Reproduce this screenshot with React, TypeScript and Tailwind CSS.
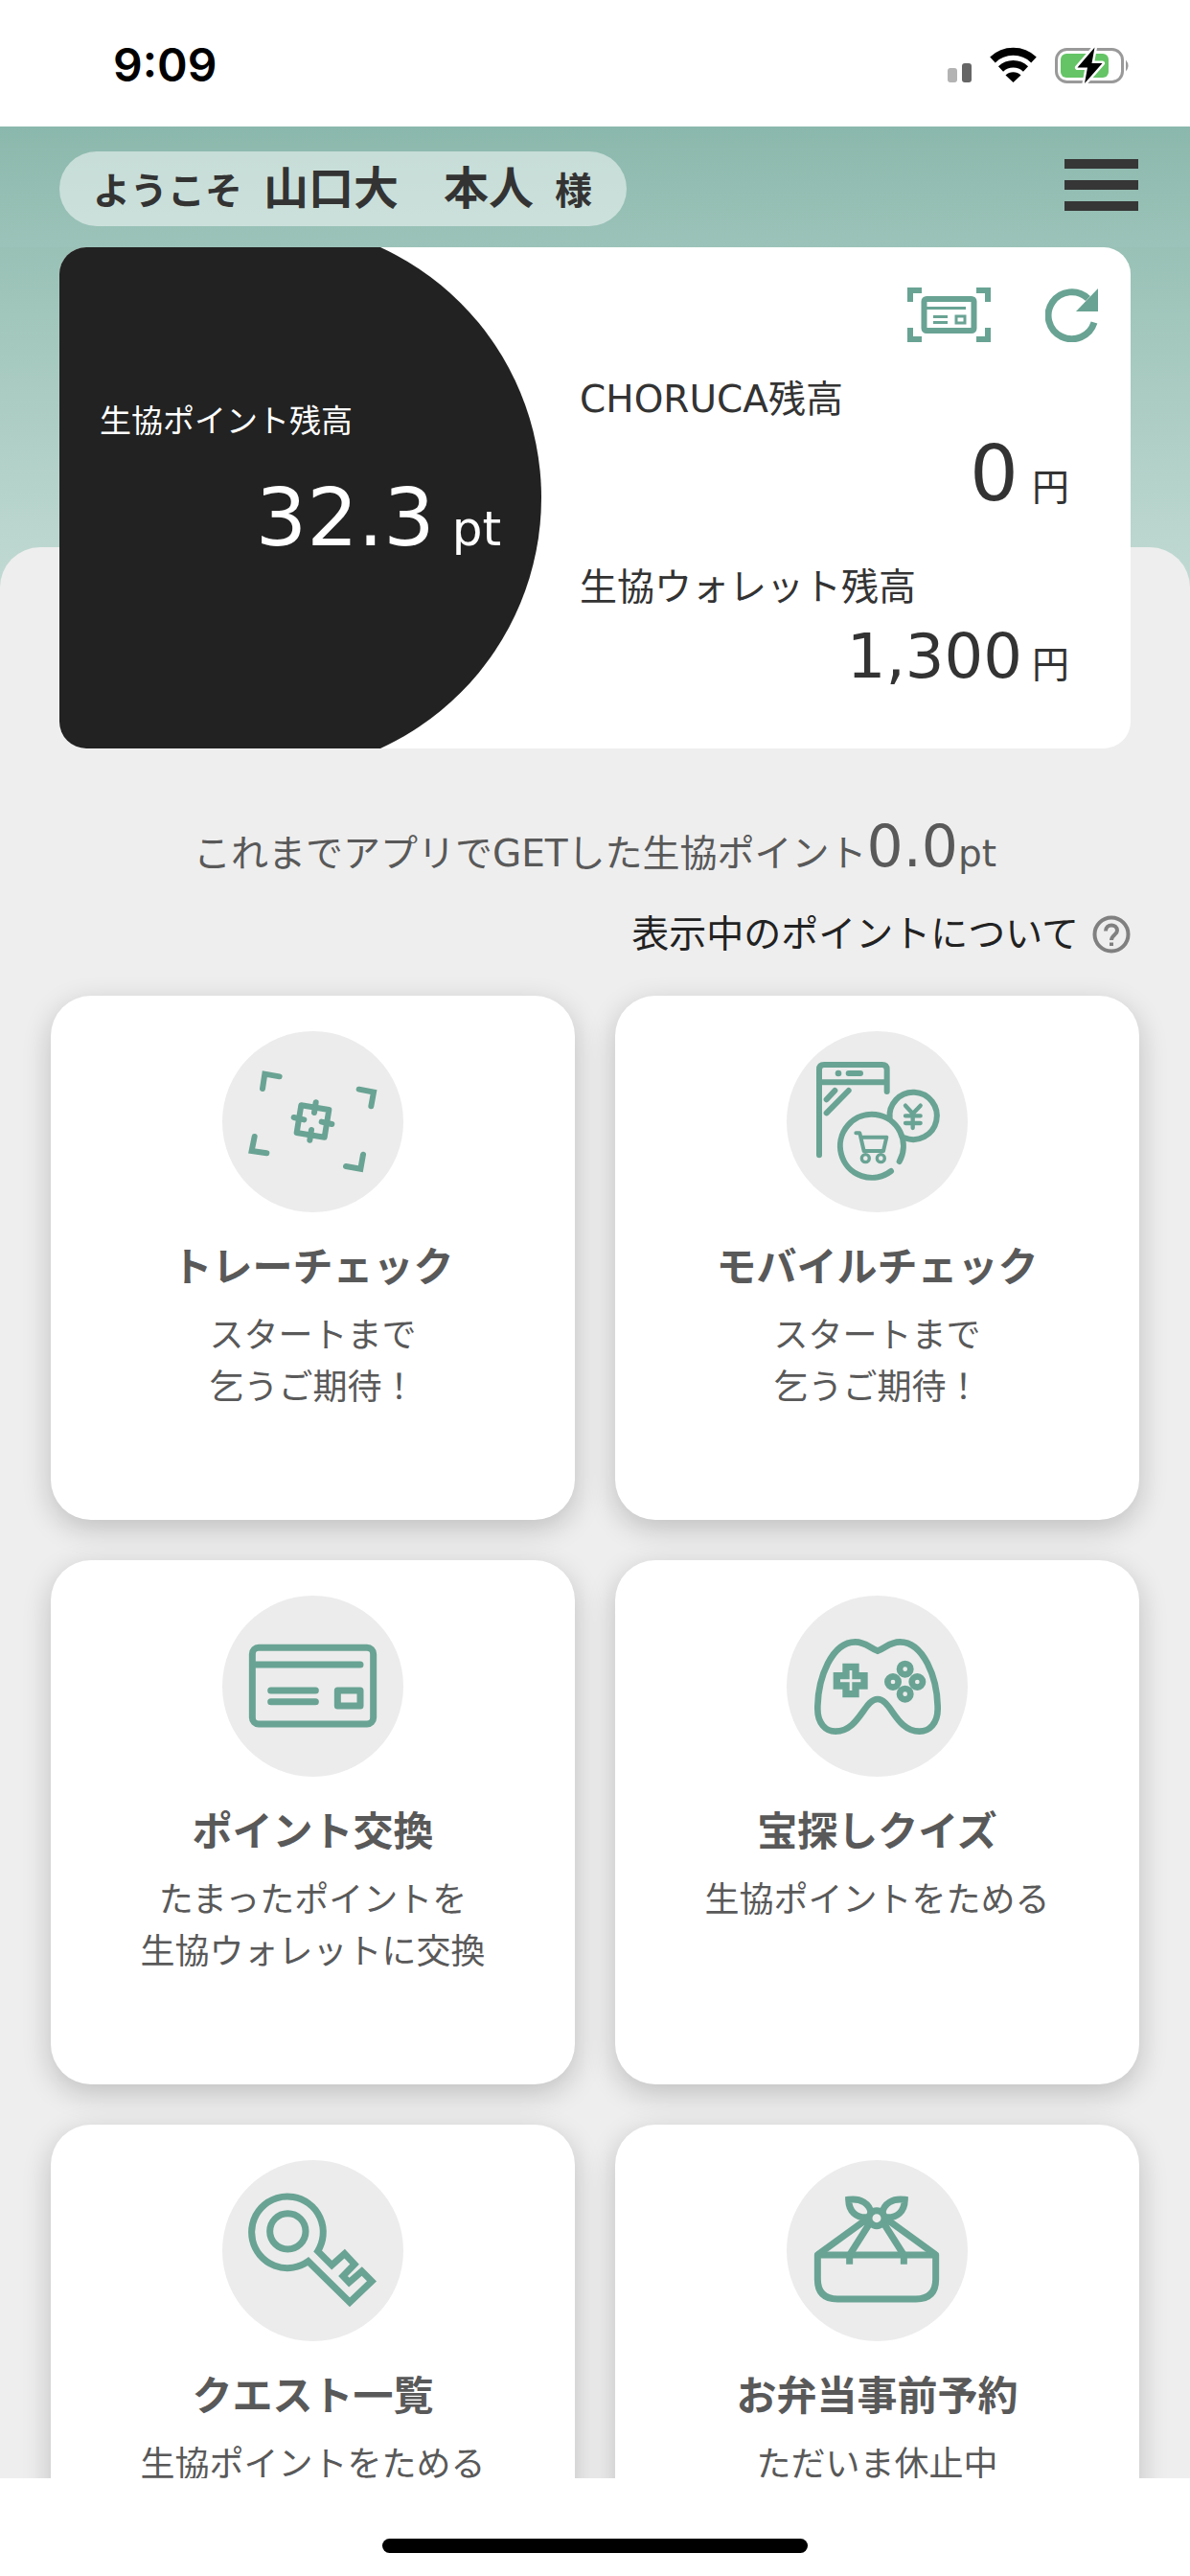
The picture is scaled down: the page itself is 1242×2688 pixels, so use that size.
import type { ReactNode } from "react";

function StatusBar() {
  return (
    <div className="flex h-[132px] shrink-0 items-center justify-between bg-white pl-[118px] pr-[62px] pt-1">
      <span className="font-['Inter',sans-serif] text-[48px] font-semibold leading-none text-black">9:09</span>
      <svg viewBox="0 0 192 40" className="h-10 w-48" aria-hidden="true">
        <rect x="1" y="23" width="10" height="15" rx="3" fill="#b3b3b3" />
        <rect x="16" y="18" width="10" height="20" rx="3" fill="#666" />
        <g fill="none" stroke="#000">
          <path d="M48 14.5A31 31 0 0 1 91 14.5" strokeWidth="8" />
          <path d="M56.500 24A19 19 0 0 1 82.500 24" strokeWidth="7.500" />
        </g>
        <path d="M69.500 38L61.500 30.500A11.500 11.500 0 0 1 77.500 30.500Z" />
        <rect x="114.500" y="3.500" width="69" height="34" rx="11" fill="none" stroke="#999" strokeWidth="3" />
        <path d="M187 14.500Q192 20.500 187 26.500Z" fill="#999" />
        <rect x="119" y="8" width="50" height="25" rx="6" fill="#65c466" />
        <path
          d="M154.500 1.500L136.500 22.500H147L144 39L162.500 18H151.500Z"
          stroke="#fff"
          strokeWidth="5"
          strokeLinejoin="round"
          paintOrder="stroke"
        />
      </svg>
    </div>
  );
}

function Header() {
  return (
    <header className="flex h-[126px] shrink-0 items-start justify-between bg-linear-to-b from-[#8bb8ac] to-[#9cc3b9] pl-[62px] pr-[54px] pt-[26px]">
      <p className="flex h-[78px] items-baseline gap-[22px] rounded-full bg-white/50 pl-[35px] pr-9 text-[39px] font-bold leading-[78px] text-[#333]">
        <span>ようこそ</span>
        <span className="text-[47px]">山口大　本人</span>
        <span>様</span>
      </p>
      <button type="button" aria-label="メニュー" className="mt-2 flex w-[77px] flex-col gap-3">
        <span className="h-[10px] bg-[#363636]" />
        <span className="h-[10px] bg-[#363636]" />
        <span className="h-[10px] bg-[#363636]" />
      </button>
    </header>
  );
}

function ScanCardIcon() {
  return (
    <svg viewBox="0 0 87 57" className="h-[57px] w-[87px]" fill="none" stroke="#69a393" aria-hidden="true">
      <path d="M3 15V3H15M72 3H84V15M84 42V54H72M15 54H3V42" strokeWidth="6" />
      <rect x="17.500" y="12" width="52" height="33" rx="2.500" strokeWidth="6" />
      <path d="M19 21.500H61M27 30.500H42M27 36.500H42" strokeWidth="3" />
      <rect x="51" y="30" width="9" height="7" strokeWidth="3" />
    </svg>
  );
}

function RefreshIcon() {
  return (
    <svg viewBox="0 0 55 56" className="h-14 w-[55px]" aria-hidden="true">
      <path d="M51 35.500A24.500 24.500 0 1 1 44.500 10.500" fill="none" stroke="#69a393" strokeWidth="7" />
      <path d="M55 0V24H32Z" fill="#69a393" />
    </svg>
  );
}

function BalanceCard() {
  return (
    <section className="relative z-10 mx-[62px] flex h-[523px] overflow-hidden rounded-[28px] bg-white">
      <div className="relative w-[45%] overflow-hidden pl-[42px] pr-[42px] pt-40 text-white before:absolute before:-inset-y-[26px] before:-left-72 before:right-0 before:rounded-r-full before:bg-[#222]">
        <div className="relative">
          <h2 className="text-[33px] leading-[44px]">生協ポイント残高</h2>
          <p className="mt-9 flex items-baseline justify-end gap-[18px] leading-none">
            <span className="text-[84px]">32.3</span>
            <span className="text-[50px]">pt</span>
          </p>
        </div>
      </div>
      <div className="flex-1 pl-10 pr-[34px] pt-[42px] text-[#333]">
        <div className="flex justify-end gap-[57px]">
          <button type="button" aria-label="カードを表示">
            <ScanCardIcon />
          </button>
          <button type="button" aria-label="更新">
            <RefreshIcon />
          </button>
        </div>
        <h2 className="mt-[38px] text-[39px] leading-[44px]">CHORUCA残高</h2>
        <p className="mt-4 flex items-baseline justify-end gap-[14px] pr-[30px] leading-none">
          <span className="text-[80px]">0</span>
          <span className="text-[39px]">円</span>
        </p>
        <h2 className="mt-14 text-[39px] leading-[44px]">生協ウォレット残高</h2>
        <p className="mt-[18px] flex items-baseline justify-end gap-[10px] pr-[30px] leading-none">
          <span className="text-[64px]">1,300</span>
          <span className="text-[39px]">円</span>
        </p>
      </div>
    </section>
  );
}

function TrayIcon() {
  return (
    <svg viewBox="66 48 567 567" className="size-full" fill="none" stroke="#69a393" strokeWidth="18" strokeLinecap="round">
      <path d="M192 228L199 182L245 190M494 230L540 239L532 283M167 378L158 423L205 430M507 434L499 479L453 471" />
      <path d="M313 280L400 294L386 380L299 366Z" strokeLinejoin="round" />
      <path d="M359 271L354 303M290 318L322 325M377 332L409 339M345 357L340 389" />
    </svg>
  );
}

function MobileIcon() {
  return (
    <svg viewBox="33 48 567 567" className="size-full" fill="none" stroke="#69a393" strokeWidth="18" strokeLinecap="round">
      <path d="M135 436V168Q135 153 150 153H332Q347 153 347 168V237M135 208H347M227 180H264" />
      <path d="M158 262L184 234M158 304L227 234" />
      <circle cx="195" cy="180" r="10" fill="#69a393" stroke="none" />
      <path d="M386 456A99 99 0 1 0 360 486" />
      <path d="M356 322A74 74 0 1 1 402 382" />
      <path d="M405 281L428 306L452 281M428 306V351M405 313H452M405 336H452" strokeWidth="13" />
      <path d="M250 367H262L275 423H336L346 380H266" strokeWidth="12" strokeLinejoin="round" />
      <circle cx="280" cy="446" r="12" strokeWidth="10" />
      <circle cx="328" cy="446" r="12" strokeWidth="10" />
    </svg>
  );
}

function PointCardIcon() {
  return (
    <svg viewBox="66 45 567 567" className="size-full" fill="none" stroke="#69a393" strokeWidth="21" strokeLinecap="round">
      <rect x="160" y="208" width="379" height="239" rx="20" />
      <path d="M165 261H498M218 342H358M218 377H358" />
      <rect x="427" y="342" width="71" height="48" strokeLinejoin="round" />
    </svg>
  );
}

function GameIcon() {
  return (
    <svg viewBox="33 45 567 567" className="size-full" fill="none" stroke="#69a393" strokeWidth="20">
      <path d="M318 218C345 208 355 190 388 190C460 190 506 300 506 400C506 445 480 470 449 470C375 470 360 369 318 369C276 369 260 470 186 470C155 470 130 445 130 400C130 300 176 190 248 190C281 190 291 208 318 218Z" />
      <path d="M219 268H249V296H276V327H249V353H219V327H190V296H219Z" strokeWidth="22" />
      <circle cx="404" cy="275" r="17" />
      <circle cx="366" cy="315" r="17" />
      <circle cx="442" cy="315" r="17" />
      <circle cx="404" cy="353" r="17" />
    </svg>
  );
}

function KeyIcon() {
  return (
    <svg viewBox="66 45 567 567" className="size-full" fill="none" stroke="#69a393" strokeWidth="21">
      <path d="M365 330A112 112 0 1 0 335 362L465 490L534 424L503 393L463 428L444 408L480 371L449 338L409 374Z" />
      <circle cx="271" cy="268" r="56" />
    </svg>
  );
}

function BentoIcon() {
  return (
    <svg viewBox="33 45 567 567" className="size-full" fill="none" stroke="#69a393" strokeWidth="21">
      <path d="M130 342V418Q130 480 192 480H438Q500 480 500 418V342Z" strokeLinejoin="round" />
      <path d="M132 340L284 230M498 340L346 230M230 371V342L291 246M400 371V342L339 246" />
      <circle cx="315" cy="227" r="24" />
      <path d="M298 212C292 180 265 164 227 169C228 205 250 228 288 224" />
      <path d="M332 212C338 180 365 164 403 169C402 205 380 228 342 224" />
    </svg>
  );
}

const menus: { title: string; lines: string[]; icon: ReactNode }[] = [
  { title: "トレーチェック", lines: ["スタートまで", "乞うご期待！"], icon: <TrayIcon /> },
  { title: "モバイルチェック", lines: ["スタートまで", "乞うご期待！"], icon: <MobileIcon /> },
  { title: "ポイント交換", lines: ["たまったポイントを", "生協ウォレットに交換"], icon: <PointCardIcon /> },
  { title: "宝探しクイズ", lines: ["生協ポイントをためる"], icon: <GameIcon /> },
  { title: "クエスト一覧", lines: ["生協ポイントをためる"], icon: <KeyIcon /> },
  { title: "お弁当事前予約", lines: ["ただいま休止中"], icon: <BentoIcon /> },
];

function MenuCard({ title, lines, icon }: { title: string; lines: string[]; icon: ReactNode }) {
  return (
    <a
      href="#"
      className="flex aspect-square flex-col items-center rounded-[42px] bg-white pt-[37px] text-[#595959] shadow-[0_9px_30px_rgba(0,0,0,0.2)]"
    >
      <span className="size-[189px] rounded-full bg-[#ececec]">{icon}</span>
      <h3 className="mt-[26px] text-[42px] font-bold leading-[64px]">{title}</h3>
      <p className="mt-3 text-center text-[36px] leading-[54px]">
        {lines.map((line) => (
          <span key={line} className="block">
            {line}
          </span>
        ))}
      </p>
    </a>
  );
}

export default function App() {
  return (
    <div className="flex h-screen flex-col bg-white font-['DejaVu_Sans','Noto_Sans_CJK_JP',sans-serif]">
      <StatusBar />
      <Header />
      <main className="min-h-0 flex-1 overflow-y-auto bg-[linear-gradient(to_bottom,#99c1b6,#c1dad3_354px)] [scrollbar-width:none]">
        <BalanceCard />
        <div className="-mt-[210px] rounded-t-[42px] bg-[#eee] pb-16 pt-[210px]">
          <p className="flex items-baseline justify-center pt-[72px] text-[39px] leading-[60px] text-[#595959]">
            これまでアプリでGETした生協ポイント
            <span className="text-[60px]">0.0</span>
            pt
          </p>
          <div className="mt-6 flex justify-end px-[62px]">
            <a href="#" className="flex items-center gap-[14px] text-[39px] leading-[60px] text-[#222]">
              表示中のポイントについて
              <svg viewBox="0 0 40 40" className="size-10" fill="none" stroke="#808080" strokeWidth="4" aria-hidden="true">
                <circle cx="20" cy="20" r="17.500" />
                <path d="M14 16.500C14 8.500 26 8.500 26 16C26 20.500 20 20.500 20 26M20 28.500V32" />
              </svg>
            </a>
          </div>
          <div className="mt-[34px] grid grid-cols-2 gap-[42px] px-[53px]">
            {menus.map((menu) => (
              <MenuCard key={menu.title} {...menu} />
            ))}
          </div>
        </div>
      </main>
      <footer className="flex h-[102px] shrink-0 items-end justify-center bg-white pb-6">
        <div className="h-[15px] w-[444px] rounded-full bg-black" />
      </footer>
    </div>
  );
}
